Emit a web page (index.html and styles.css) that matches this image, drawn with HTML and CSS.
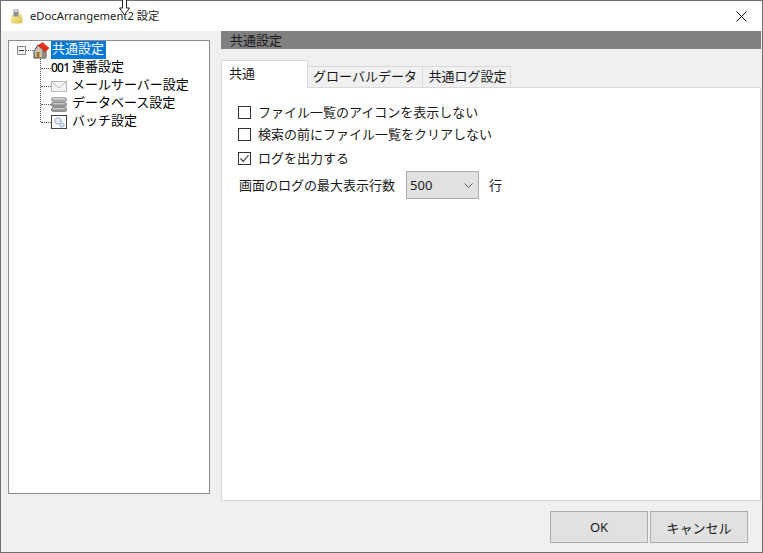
FILE: index.html
```html
<!DOCTYPE html>
<html lang="ja">
<head>
<meta charset="utf-8">
<title>eDocArrangement2 設定</title>
<link rel="stylesheet" href="styles.css">
</head>
<body>
<div class="window">
  <header class="titlebar">
    <svg class="app-icon" width="13" height="15" viewBox="0 0 13 15"><defs><linearGradient id="bag" x1="0" y1="0" x2="1" y2="1"><stop offset="0" stop-color="#fdf7c0"/><stop offset="1" stop-color="#d9bf3e"/></linearGradient></defs><path d="M1 7 Q1 5 3 5 L10 4.5 Q12 5 12 8 L12.5 12 Q12.5 14.5 10 14.5 L3 14.5 Q0.5 14.5 0.5 12 Z" fill="url(#bag)"/><rect x="3.5" y="0.5" width="5" height="7" fill="#8f8f8f"/><rect x="4.5" y="1" width="3" height="2" fill="#d8d8d8"/></svg>
    <span class="title-text">eDocArrangement2 設定</span>
    <svg class="close-icon" width="11" height="11" viewBox="0 0 11 11"><path d="M0.5 0.5 L10.5 10.5 M10.5 0.5 L0.5 10.5" stroke="#111" stroke-width="1" fill="none"/></svg>
  </header>
  <svg class="cursor" width="11" height="16" viewBox="0 0 11 16"><path d="M3.5 0 V8 H0.5 L5.5 15 L10.5 8 H7.5 V0" fill="#fff" stroke="#222" stroke-width="1"/><rect x="4" y="0" width="3" height="8" fill="#fff"/><path d="M3.5 0 V8 M7.5 0 V8" stroke="#222"/></svg>

  <div class="content">
    <nav class="tree">
      <div class="tree-row root-row">
        <span class="expander"><span class="minus"></span></span>
        <svg class="root-icon" width="18" height="17" viewBox="0 0 18 17"><path d="M2 9 L2 16 L14 16 L14 10 L6 3 Z" fill="#c9c2b2" stroke="#3c3c3c"/><path d="M10 16 V7 L14 10 V16 Z" fill="#8f8a80"/><path d="M4.5 16 V10 H7.5 V16 Z" fill="#a8701f"/><path d="M6 3.5 L10.5 0.5 L17 6 L13.5 10 Z" fill="#e0301e" stroke="#b3261a" stroke-width=".5"/></svg>
        <span class="selected">共通設定</span>
      </div>
      <div class="tree-children">
        <div class="tree-row child">
          <span class="code-icon">001</span><span class="label">連番設定</span>
        </div>
        <div class="tree-row child">
          <svg class="child-icon" width="16" height="11" viewBox="0 0 16 11"><rect x="0.5" y="0.5" width="15" height="10" fill="#f2f2f2" stroke="#b8b8b8"/><path d="M1 1 L8 7 L15 1" fill="none" stroke="#b8b8b8"/></svg>
          <span class="label">メールサーバー設定</span>
        </div>
        <div class="tree-row child">
          <svg class="child-icon" width="16" height="15" viewBox="0 0 16 15"><rect x="0" y="0" width="16" height="5" rx="2.5" fill="#a6a6a6"/><rect x="0" y="5" width="16" height="5" rx="2.5" fill="#8f8f8f"/><rect x="0" y="10" width="16" height="5" rx="2.5" fill="#8f8f8f"/><rect x="2" y="1" width="12" height="1.5" fill="#d8d8d8"/><rect x="2" y="6" width="12" height="1.5" fill="#c8c8c8"/><rect x="2" y="11" width="12" height="1.5" fill="#c8c8c8"/></svg>
          <span class="label">データベース設定</span>
        </div>
        <div class="tree-row child">
          <svg class="child-icon" width="16" height="14" viewBox="0 0 16 14"><rect x="0.5" y="0.5" width="15" height="13" fill="#fff" stroke="#444"/><circle cx="7" cy="6" r="3.2" fill="#dfe7ef" stroke="#5b7fa8" stroke-dasharray="1.2 .8"/><circle cx="11" cy="10" r="2" fill="#eaf1f8" stroke="#2f77c0" stroke-dasharray="1 .6"/></svg>
          <span class="label">バッチ設定</span>
        </div>
      </div>
    </nav>

    <main class="pane">
      <div class="pane-header">共通設定</div>
      <div class="tabs">
        <div class="tab active">共通</div>
        <div class="tab tab-global">グローバルデータ</div>
        <div class="tab tab-log">共通ログ設定</div>
      </div>
      <section class="tab-panel">
        <label class="check-row first"><span class="check"></span>ファイル一覧のアイコンを表示しない</label>
        <label class="check-row second"><span class="check"></span>検索の前にファイル一覧をクリアしない</label>
        <label class="check-row third"><span class="check"><svg width="11" height="11" viewBox="0 0 11 11"><path d="M1.5 5.5 L4.3 8.5 L9.5 2" fill="none" stroke="#333" stroke-width="1.1"/></svg></span>ログを出力する</label>
        <div class="select-row">
          <span class="select-label">画面のログの最大表示行数</span>
          <div class="select"><span class="select-value">500</span><svg width="9" height="5" viewBox="0 0 9 5"><path d="M0.5 0.5 L4.5 4.5 L8.5 0.5" fill="none" stroke="#555"/></svg></div>
          <span class="select-label">行</span>
        </div>
      </section>
    </main>
  </div>

  <footer class="footer">
    <button class="btn">OK</button>
    <button class="btn">キャンセル</button>
  </footer>
</div>
</body>
</html>
```
FILE: styles.css
```css
* { box-sizing: border-box; }
html, body { margin: 0; padding: 0; }
body {
  width: 763px;
  height: 553px;
  overflow: hidden;
  font-family: "Noto Sans CJK JP", "Noto Sans", sans-serif;
  font-size: 13px;
  color: #1a1a1a;
}
.window {
  position: relative;
  width: 763px;
  height: 553px;
  border: 1px solid #6e6e6e;
  background: #f0f0f0;
  display: flex;
  flex-direction: column;
}
.titlebar {
  height: 30px;
  flex: none;
  background: #fff;
  display: flex;
  align-items: center;
  padding: 0 15px 0 9px;
}
.app-icon { flex: none; }
.title-text {
  margin-left: 7px;
  font-family: "Noto Sans", "Noto Sans CJK JP", sans-serif;
  font-size: 11.25px;
  line-height: 30px;
}
.close-icon { margin-left: auto; }
.cursor { position: absolute; left: 118px; top: -1px; }
.content {
  flex: 1;
  display: flex;
  min-height: 0;
}
.tree {
  width: 202px;
  height: 454px;
  margin: 9px 0 0 7px;
  flex: none;
  background: #fff;
  border: 1px solid #8c8c8c;
  padding-top: 1px;
  line-height: 18px;
  color: #000;
}
.tree-row {
  height: 18px;
  display: flex;
  align-items: center;
  white-space: nowrap;
}
.root-row { margin-top: -1px; padding-left: 8px; }
.label { margin-bottom: 4px; }
.expander {
  width: 9px;
  height: 9px;
  flex: none;
  border: 1px solid #8a8a8a;
  background: #f4f4f4;
  display: flex;
  align-items: center;
  justify-content: center;
  position: relative;
}
.expander::after {
  content: "";
  position: absolute;
  left: 8px;
  top: 3px;
  width: 7px;
  border-top: 1px dotted #555;
}
.minus { width: 5px; height: 1px; background: #333; }
.root-icon { margin-left: 6px; flex: none; }
.selected {
  margin-left: 1px;
  padding: 0 2px 4px 1px;
  background: #0078d7;
  color: #fff;
  line-height: 14px;
}
.tree-children {
  margin-left: 31px;
  border-left: 1px dotted #555;
  height: 63px;
}
.child {
  position: relative;
  padding-left: 10px;
}
.child::before {
  content: "";
  position: absolute;
  left: 0;
  top: 9px;
  width: 10px;
  border-top: 1px dotted #555;
}
.child-icon { flex: none; margin-right: 5px; }
.code-icon {
  width: 21px;
  flex: none;
  font-family: "Noto Sans", sans-serif;
  font-size: 12px;
  font-weight: 500;
  letter-spacing: -0.8px;
  color: #000;
}
.pane {
  width: 540px;
  margin-left: 11px;
  flex: none;
  display: flex;
  flex-direction: column;
  height: 470px;
}
.pane-header {
  height: 18px;
  background: #808080;
  color: #1a1a1a;
  padding-left: 9px;
  line-height: 18px;
  flex: none;
}
.tabs {
  display: flex;
  align-items: flex-end;
  height: 39px;
  flex: none;
  position: relative;
  z-index: 1;
}
.tab {
  height: 22px;
  line-height: 18px;
  background: #f0f0f0;
  border: 1px solid #d9d9d9;
  border-left: 0;
  border-bottom: 1px solid #d9d9d9;
  text-align: center;
  white-space: nowrap;
}
.tab.active {
  width: 87px;
  height: 28px;
  background: #fff;
  border: 1px solid #d9d9d9;
  border-bottom: 0;
  text-align: left;
  padding-left: 7px;
  line-height: 23px;
}
.tab-global { width: 115px; }
.tab-log { width: 88px; padding-left: 2px; }
.tab-panel {
  flex: 1;
  background: #fff;
  border: 1px solid #d9d9d9;
  margin-top: -1px;
  display: flex;
  flex-direction: column;
  align-items: flex-start;
}
.check-row {
  display: flex;
  align-items: center;
  height: 20px;
  padding-left: 16px;
  white-space: nowrap;
}
.check-row.first { margin-top: 13px; }
.check-row.second { margin-top: 2px; }
.check-row.third { margin-top: 4px; }
.check {
  width: 13px;
  height: 13px;
  flex: none;
  border: 1px solid #333;
  background: #fff;
  margin-top: 3px;
  margin-right: 7px;
  display: flex;
  align-items: center;
  justify-content: center;
}
.select-row {
  display: flex;
  align-items: center;
  margin-top: 4px;
  padding-left: 17px;
  white-space: nowrap;
}
.select-label { margin-bottom: 2px; }
.select {
  width: 73px;
  height: 28px;
  margin-left: 11px;
  margin-right: 10px;
  background: #e1e1e1;
  border: 1px solid #adadad;
  display: flex;
  align-items: center;
  justify-content: space-between;
  padding: 0 5px 0 3px;
}
.select-value { font-family: "Noto Sans", sans-serif; font-size: 13px; }
.footer {
  flex: none;
  height: 51px;
  display: flex;
  justify-content: flex-end;
  align-items: flex-start;
  gap: 2px;
  padding: 10px 14px 0 0;
}
.btn {
  width: 98px;
  height: 32px;
  background: #e1e1e1;
  border: 1px solid #adadad;
  font-family: "Noto Sans", "Noto Sans CJK JP", sans-serif;
  font-size: 13px;
  color: #1a1a1a;
  padding: 0;
}
```
